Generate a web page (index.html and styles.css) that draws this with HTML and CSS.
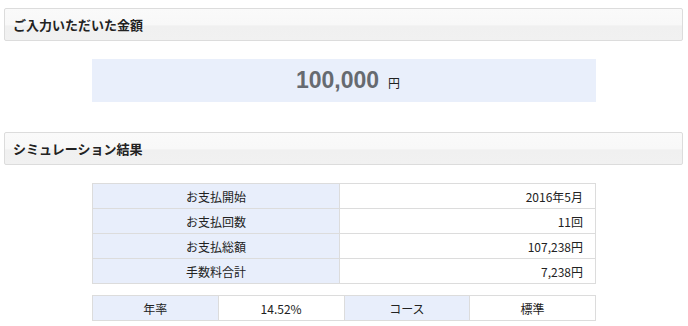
FILE: index.html
```html
<!DOCTYPE html>
<html lang="ja">
<head>
<meta charset="utf-8">
<link rel="stylesheet" href="styles.css">
</head>
<body>
<div class="page">
  <h2 class="section-head">ご入力いただいた金額</h2>
  <div class="amount-box">
    <span class="amount">100,000</span><span class="yen">円</span>
  </div>
  <h2 class="section-head head-2">シミュレーション結果</h2>
  <table class="result">
    <tr><th>お支払開始</th><td>2016年5月</td></tr>
    <tr><th>お支払回数</th><td>11回</td></tr>
    <tr><th>お支払総額</th><td>107,238円</td></tr>
    <tr><th>手数料合計</th><td>7,238円</td></tr>
  </table>
  <table class="rate">
    <tr><th>年率</th><td>14.52%</td><th>コース</th><td>標準</td></tr>
  </table>
</div>
</body>
</html>
```
FILE: styles.css
```css
html, body {
  margin: 0;
  padding: 0;
  background: #fff;
}
body {
  font-family: "Noto Sans CJK JP", "Liberation Sans", sans-serif;
  color: #333;
  font-size: 12px;
}
.page {
  padding: 8px 5px 0 4px;
}
.section-head {
  margin: 0;
  height: 33px;
  box-sizing: border-box;
  border: 1px solid #dcdcdc;
  border-radius: 2px;
  background: linear-gradient(#fafafa 0%, #f8f8f8 50%, #f0f0f0 55%, #f1f1f1 100%);
  font-size: 13px;
  font-weight: bold;
  color: #222;
  padding: 0 0 0 8px;
  display: flex;
  align-items: center;
}
.head-2 {
  margin-top: 30px;
}
.amount-box {
  margin: 18px 0 0 88px;
  width: 504px;
  height: 43px;
  background: #e9effb;
  display: flex;
  align-items: center;
  justify-content: center;
  padding-left: 8px;
  box-sizing: border-box;
}
.amount {
  font-family: "Liberation Sans", Arial, sans-serif;
  font-size: 23px;
  font-weight: bold;
  color: #666a70;
}
.yen {
  font-size: 12px;
  color: #222;
  margin-left: 9px;
  margin-top: 4px;
}
table {
  border-collapse: collapse;
  margin-left: 88px;
  width: 504px;
  table-layout: fixed;
}
th, td {
  border: 1px solid #dcdcdc;
  height: 24px;
  padding: 0;
  font-weight: normal;
  font-size: 12px;
  color: #222;
}
th {
  background: #e8eefb;
  text-align: center;
}
.result {
  margin-top: 18px;
}
.result th {
  width: 246px;
}
.result td {
  text-align: right;
  padding-right: 12px;
}
.rate {
  margin-top: 11px;
}
.rate td {
  text-align: center;
  background: #fff;
}
```
